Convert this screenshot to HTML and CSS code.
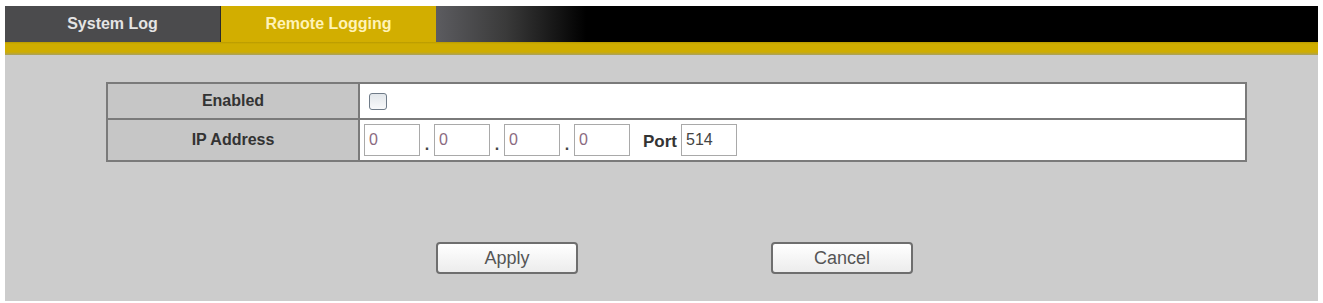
FILE: index.html
```html
<!DOCTYPE html>
<html lang="en">
  <head>
    <meta charset="UTF-8" />
    <meta name="viewport" content="width=device-width, initial-scale=1.0" />
    <title>Remote Logging</title>
    <link rel="stylesheet" href="styles.css">
  </head>
  <body>
    <div class="wrap">
      <div class="tabs">
        <div class="tab">System Log</div>
        <div class="tab active">Remote Logging</div>
        <div class="tab-rest"></div>
      </div>
      <div class="band"></div>
      <div class="panel">
        <table class="form">
          <tr>
            <td class="label">Enabled</td>
            <td class="value"><span class="check"></span></td>
          </tr>
          <tr>
            <td class="label">IP Address</td>
            <td class="value">
              <div class="ip">
                <input class="box" type="text" value="0" />
                <span class="dot">.</span>
                <input class="box" type="text" value="0" />
                <span class="dot">.</span>
                <input class="box" type="text" value="0" />
                <span class="dot">.</span>
                <input class="box" type="text" value="0" />
                <span class="port-label">Port</span>
                <input class="box port" type="text" value="514" />
              </div>
            </td>
          </tr>
        </table>
        <div class="buttons">
          <button class="btn">Apply</button>
          <button class="btn">Cancel</button>
        </div>
      </div>
    </div>
  </body>
</html>
```

FILE: styles.css
```css
* {
  margin: 0;
  padding: 0;
  box-sizing: border-box;
}
body {
  background: #fff;
  font-family: "Liberation Sans", Arial, sans-serif;
}
.wrap {
  padding: 6px 5px 2px 5px;
}
.tabs {
  display: flex;
  height: 36px;
}
.tab {
  width: 216px;
  background: #4b4b4d;
  color: #e4e4e4;
  font-size: 16px;
  font-weight: bold;
  text-align: center;
  line-height: 36px;
  border-right: 1px solid #2a2a2a;
}
.tab.active {
  width: 215px;
  background: #d2ae00;
  color: #fff3b8;
  border-right: none;
}
.tab-rest {
  flex: 1;
  background: linear-gradient(to right, #5c5c60 0px, #3a3a3a 70px, #000 150px, #000 100%);
}
.band {
  height: 13px;
  background: linear-gradient(to bottom, #b89a00 0px, #cfad00 2px, #cfad00 10px, #a8a060 13px);
}
.panel {
  background: #cccccc;
  height: 246px;
  padding-top: 27px;
}
.form {
  margin-left: 101px;
  width: 1141px;
  border-collapse: collapse;
  border: 2px solid #7a7a7a;
}
.form td {
  border: 2px solid #7a7a7a;
}
.label {
  width: 252px;
  background: #c6c6c6;
  color: #333;
  font-size: 16px;
  font-weight: bold;
  text-align: center;
}
.form tr:first-child td {
  height: 36px;
}
.form tr:last-child td {
  height: 42px;
}
.value {
  background: #fff;
  padding-left: 4px;
}
.check {
  display: block;
  width: 18px;
  height: 17px;
  margin-left: 5px;
  border: 1px solid #6f7b88;
  border-radius: 3px;
  background: linear-gradient(to bottom, #e2e6ea, #f8f9fa);
}
.ip {
  display: flex;
  align-items: center;
}
.box {
  width: 56px;
  height: 32px;
  border: 1px solid #a9a9a9;
  background: #fff;
  color: #8b6a80;
  font-family: "Liberation Sans", Arial, sans-serif;
  font-size: 16px;
  padding-left: 4px;
}
.dot {
  width: 14px;
  text-align: center;
  font-size: 16px;
  font-weight: bold;
  color: #444;
  padding-top: 10px;
}
.port-label {
  margin-left: 13px;
  margin-right: 4px;
  font-size: 17px;
  font-weight: bold;
  color: #333;
  padding-top: 4px;
}
.box.port {
  color: #444;
}
.buttons {
  display: flex;
  margin-top: 80px;
  margin-left: 431px;
  gap: 193px;
}
.btn {
  width: 142px;
  height: 32px;
  border: 2px solid #6e6e6e;
  border-radius: 4px;
  background: linear-gradient(to bottom, #ffffff, #ececec);
  color: #555;
  font-family: "Liberation Sans", Arial, sans-serif;
  font-size: 18px;
}
```
